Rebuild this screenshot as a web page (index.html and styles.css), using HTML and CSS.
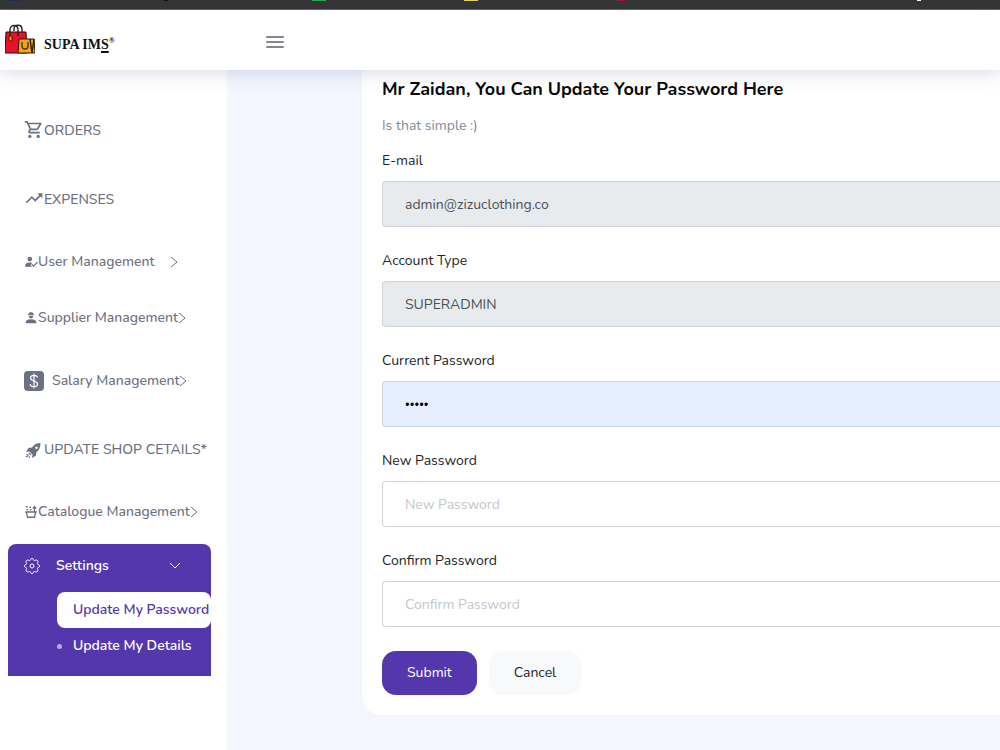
FILE: index.html
```html
<!DOCTYPE html>
<html lang="en">
<head>
  <meta charset="UTF-8">
  <title>Supa IMS - Update Password</title>
  <link rel="stylesheet" href="styles.css">
</head>
<body>

<div class="tab-strip">
  <span class="tab navy"></span>
  <span class="tab black"></span>
  <span class="tab green"></span>
  <span class="tab yellow"></span>
  <span class="tab red"></span>
  <span class="tab"></span>
  <span class="tab white"></span>
</div>

<header class="topbar">
  <a class="brand" href="#">
    <svg class="brand-icon" width="30" height="30" viewBox="0 0 30 30">
      <path d="M1 8h20l1 21H0z" fill="#e8102c" stroke="#26090c"/>
      <path d="M5 13V6c0-6 8-6 8 0v6M9 7V5c0-5 8-5 8 0v3" fill="none" stroke="#222" stroke-width="1.4"/>
      <rect x="4" y="12" width="3" height="5" rx="1" fill="#f5a800" stroke="#30180a"/>
      <path d="M14 15h15l1 14H13z" fill="#f2a51a" stroke="#2b1a05"/>
      <path d="M17 18v4c0 4 6 4 6 0v-4" fill="none" stroke="#5a3500" stroke-width="1.4"/>
      <path d="M25 15l2 14M29 15l-2 14" stroke="#2b1a05" stroke-width="1.4"/>
    </svg>
    <span class="brand-name">SUPA IM<u>S</u><sup>®</sup></span>
  </a>
  <button class="menu-toggle" type="button" aria-label="Toggle menu">
    <svg width="18" height="14" viewBox="0 0 18 14" stroke="#85858f" stroke-width="2" stroke-linecap="round"><path d="M1 2h16M1 7h16M1 12h16"/></svg>
  </button>
</header>

<div class="layout">
  <nav class="sidebar">
    <a class="item large" href="#">
      <svg width="20" height="20" viewBox="0 0 24 24" fill="currentColor"><path d="M15.550 11c.75 0 1.410-.41 1.750-1.030l3.580-6.490A.996.996 0 0 0 20.010 2H5.210l-.94-2H1v2h2l3.600 7.590-1.350 2.440C4.520 13.370 5.480 15 7 15h12v-2H7l1.100-2h7.450zM6.160 4h12.150l-2.760 5H8.530L6.160 4zM7 16.500a2 2 0 1 0 0 4 2 2 0 0 0 0-4zm10 0a2 2 0 1 0 0 4 2 2 0 0 0 0-4z"/></svg>
      <span>ORDERS</span>
    </a>
    <a class="item large" href="#">
      <svg width="20" height="20" viewBox="0 0 24 24" fill="currentColor"><path d="M16 4l2.290 2.290-4.880 4.880-4-4L2 14.590 3.410 16l6-6 4 4 6.300-6.290L22 10V4z"/></svg>
      <span>EXPENSES</span>
    </a>
    <a class="item" href="#">
      <svg width="14" height="14" viewBox="0 0 24 24" fill="currentColor"><circle cx="10" cy="7" r="4"/><path d="M2 20v-2c0-3 3-5 8-5 1.500 0 3 .2 4 .6L11 17l3 3zM16.500 20.500l-4-4 1.500-1.500 2.500 2.500 6-6L24 13z"/></svg>
      <span class="short">User Management</span>
      <svg class="chevron" width="8" height="12" viewBox="0 0 8 12"><path d="M1 1l6 5-6 5"/></svg>
    </a>
    <a class="item" href="#">
      <svg width="14" height="14" viewBox="0 0 24 24" fill="currentColor"><path d="M8 5c0-2 2-3 3-3h2c1 0 3 1 3 3h1v2H7V5zM8 8h8c0 6-8 6-8 0zM3 21v-2c0-3 3-5 9-5s9 2 9 5v2z"/></svg>
      <span>Supplier Management</span>
      <svg class="chevron" width="8" height="12" viewBox="0 0 8 12"><path d="M1 1l6 5-6 5"/></svg>
    </a>
    <a class="item large salary" href="#">
      <svg width="20" height="20" viewBox="0 0 20 20"><rect width="20" height="20" rx="4" fill="currentColor"/><path d="M13.500 6.500C13 3.500 6.500 3.500 6.500 7c0 3.500 7 2.500 7 6 0 3.500-7 3.500-7.300 0M10 2.500v15" fill="none" stroke="#fff" stroke-width="1.200"/></svg>
      <span>Salary Management</span>
      <svg class="chevron" width="8" height="12" viewBox="0 0 8 12"><path d="M1 1l6 5-6 5"/></svg>
    </a>
    <a class="item large" href="#">
      <svg width="20" height="20" viewBox="0 0 20 20" fill="currentColor"><path fill-rule="evenodd" d="M16.500 3c-4 0-7 2-8.500 4.500L4.500 8 2 12l3.500-.5 3 3L8 18l4-2.500.5-3.500c2.500-2 4-4.500 4-9zm-4 3.500a1.300 1.300 0 1 1 0 2.600 1.300 1.300 0 0 1 0-2.600z"/><path d="M5 13l2 2M2.500 14.500l2 1M2 17l2-1M5 17.500l1-1" stroke="currentColor" stroke-width="1.300"/></svg>
      <span>UPDATE SHOP CETAILS*</span>
    </a>
    <a class="item" href="#">
      <svg width="14" height="14" viewBox="0 0 24 24" fill="none" stroke="currentColor" stroke-width="2.200"><path d="M2 12h20M4 12l2 9h12l2-9M18 11V3M15 6l3-3 3 3M3 3h3M9 4h3M4 8h3M10 8h3"/></svg>
      <span>Catalogue Management</span>
      <svg class="chevron" width="8" height="12" viewBox="0 0 8 12"><path d="M1 1l6 5-6 5"/></svg>
    </a>

    <div class="settings">
      <a class="settings-head" href="#">
        <svg width="16" height="16" viewBox="0 0 16 16" fill="none" stroke="currentColor"><path d="M6.700 1.500c.3-1.500 2.300-1.500 2.600 0 .2 1 1.200 1.400 2 .8 1.600-1.100 3.500.8 2.400 2.400-.6.8-.2 1.800.8 2 1.500.3 1.500 2.300 0 2.600-1 .2-1.400 1.200-.8 2 1.100 1.600-.8 3.500-2.400 2.400-.8-.6-1.800-.2-2 .8-.3 1.500-2.300 1.500-2.600 0-.2-1-1.200-1.400-2-.8-1.600 1.100-3.500-.8-2.400-2.400.6-.8.2-1.800-.8-2-1.500-.3-1.500-2.300 0-2.600 1-.2 1.400-1.200.8-2-1.100-1.600.8-3.500 2.400-2.400.8.6 1.800.2 2-.8z"/><circle cx="8" cy="8" r="2"/></svg>
        <span>Settings</span>
        <svg class="chevron" width="12" height="8" viewBox="0 0 12 8"><path d="M1 1l5 5 5-5"/></svg>
      </a>
      <a class="sub active" href="#">Update My Password</a>
      <a class="sub" href="#">Update My Details</a>
    </div>
  </nav>

  <main class="content">
    <form class="card">
      <h1>Mr Zaidan, You Can Update Your Password Here</h1>
      <p class="hint">Is that simple :)</p>

      <div class="field">
        <label for="email">E-mail</label>
        <input type="text" id="email" value="admin@zizuclothing.co" disabled>
      </div>
      <div class="field">
        <label for="accountType">Account Type</label>
        <input type="text" id="accountType" value="SUPERADMIN" disabled>
      </div>
      <div class="field">
        <label for="currentPassword">Current Password</label>
        <input class="filled" type="password" id="currentPassword" value="admin">
      </div>
      <div class="field">
        <label for="newPassword">New Password</label>
        <input type="password" id="newPassword" placeholder="New Password">
      </div>
      <div class="field">
        <label for="confirmPassword">Confirm Password</label>
        <input type="password" id="confirmPassword" placeholder="Confirm Password">
      </div>

      <div class="actions">
        <button class="btn primary" type="submit">Submit</button>
        <button class="btn light" type="reset">Cancel</button>
      </div>
    </form>
  </main>
</div>

</body>
</html>
```
FILE: styles.css
```css
* {
  box-sizing: border-box;
}

body {
  margin: 0;
  min-height: 100vh;
  display: flex;
  flex-direction: column;
  font-family: Nunito, Lato, sans-serif;
  font-size: 14px;
  line-height: 20px;
  color: #212529;
  background: #f3f6fe;
}

a {
  color: inherit;
  text-decoration: none;
}

/* dark strip with the bottom edges of the tab icons */
.tab-strip {
  display: flex;
  justify-content: space-between;
  height: 10px;
  padding: 0 79px 0 6px;
  background: #353535;
  border-bottom: 1px solid #666;
}

.tab {
  width: 14px;
  height: 1px;
}

.navy { background: #1d2c50; }
.black { width: 4px; background: #111; margin: 0 5px; }
.green { background: #27a850; }
.yellow { background: #f0d264; }
.red { width: 8px; background: #a01440; }
.white { width: 4px; background: #fff; }

.topbar {
  position: relative;
  z-index: 1;
  display: flex;
  align-items: center;
  height: 60px;
  background: #fff;
  box-shadow: 0 2px 20px rgba(50, 60, 120, 0.2);
}

.brand {
  display: flex;
  align-items: center;
  gap: 9px;
  width: 266px;
  padding: 0 0 0 5px;
}

.brand-icon {
  margin-bottom: 2px;
}

.brand-name {
  padding-top: 10px;
  font-family: "Liberation Serif", serif;
  font-size: 14px;
  font-weight: bold;
  color: #111;
}

.brand-name u {
  text-decoration-thickness: 2px;
  text-underline-offset: 2px;
}

.brand-name sup {
  font-size: 8px;
  line-height: 8px;
}

.menu-toggle {
  display: flex;
  padding: 4px 0 0;
  border: none;
  background: none;
}

.layout {
  flex: 1;
  display: flex;
}

.sidebar {
  flex: none;
  width: 227px;
  padding: 26px 16px 0 8px;
  background: #fff;
  color: #6c7080;
  font-weight: 500;
  white-space: nowrap;
}

.item {
  display: flex;
  align-items: center;
  height: 56px;
  padding-left: 16px;
}

.large {
  height: 69px;
}

.salary {
  gap: 8px;
}

.salary .chevron {
  margin-left: -8px;
}

.item svg {
  flex: none;
}

.short {
  min-width: 132px;
}

.chevron {
  fill: none;
  stroke: currentColor;
}

.settings {
  margin-top: 4px;
  padding-bottom: 12px;
  overflow: hidden;
  border-radius: 8px 8px 0 0;
  background: #5537ad;
  color: #fff;
  font-weight: 600;
}

.settings-head {
  display: flex;
  align-items: center;
  gap: 16px;
  height: 44px;
  margin-bottom: 4px;
  padding: 0 30px 0 16px;
}

.settings-head .chevron {
  margin-left: auto;
}

.sub {
  display: flex;
  align-items: center;
  height: 36px;
  margin-left: 49px;
}

.sub::before {
  content: "";
  flex: none;
  width: 5px;
  height: 5px;
  margin-right: 11px;
  border-radius: 50%;
  background: #b9abdf;
}

.active {
  border-radius: 8px;
  background: #fff;
  color: #5537ad;
}

.active::before {
  background: none;
}

.content {
  flex: 1;
  min-width: 0;
  padding-left: 135px;
}

.card {
  padding: 7px 0 20px 20px;
  border-radius: 0 0 0 20px;
  background: #fff;
}

h1 {
  margin: 0 0 15px;
  font-size: 18px;
  line-height: 24px;
  color: #080808;
}

.hint {
  margin: 0 0 15px;
  color: #838b96;
}

.field {
  margin-bottom: 24px;
}

.field label {
  display: block;
  margin-bottom: 10px;
}

.field input {
  display: block;
  width: 100%;
  height: 46px;
  padding: 0 22px;
  border: 1px solid #ced4da;
  border-right: none;
  border-radius: 4px 0 0 4px;
  background: #fff;
  font: inherit;
  color: #000;
}

.field input:disabled {
  background: #e8ebee;
  color: #495057;
}

.field input.filled {
  background: #e6effe;
  font-size: 9px;
}

.field input::placeholder {
  color: #c4c7cb;
}

.actions {
  display: flex;
  gap: 12px;
}

.btn {
  height: 44px;
  padding: 0 25px;
  border: none;
  border-radius: 14px;
  font: inherit;
}

.primary {
  background: #5537ad;
  color: #fff;
}

.light {
  background: #f8f9fb;
  color: #212529;
}
```
